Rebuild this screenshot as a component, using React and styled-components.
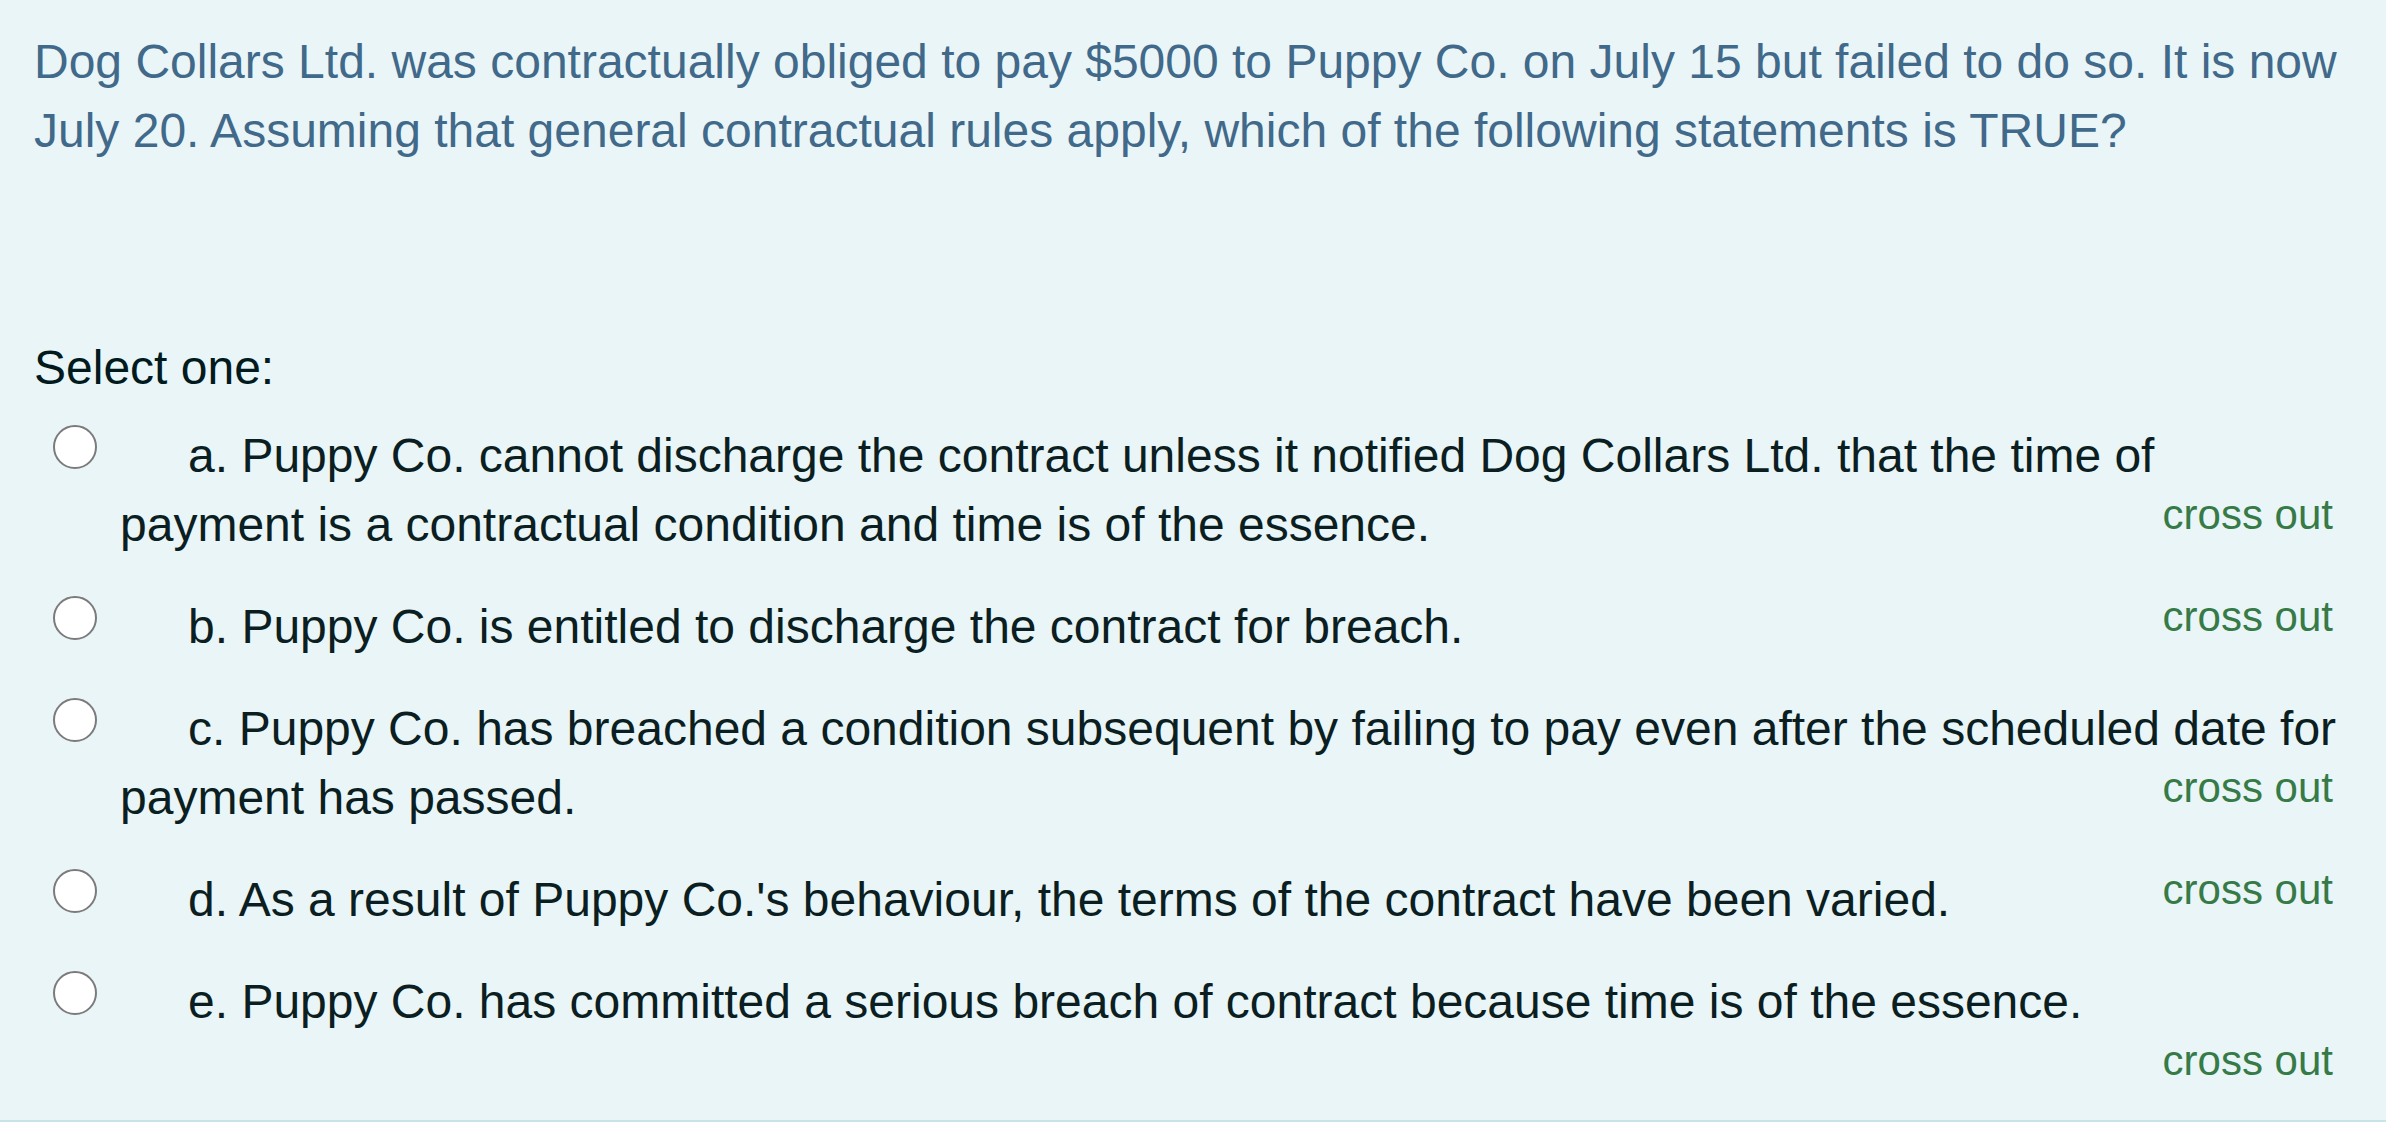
import React from "react";
import styled, { createGlobalStyle } from "styled-components";

const Global = createGlobalStyle`
  html, body {
    margin: 0;
    padding: 0;
    background: #eaf5f8;
  }
  body {
    font-family: "Liberation Sans", Arial, Helvetica, sans-serif;
  }
`;

const Formulation = styled.div`
  box-sizing: border-box;
  background: #eaf5f8;
  border-bottom: 3px solid #c8e4eb;
  padding: 27px 46px 18px 34px;
`;

const QText = styled.div`
  color: #41698a;
  font-size: 48px;
  line-height: 69px;
  margin-bottom: 168px;
`;

const Prompt = styled.div`
  color: #001a1e;
  font-size: 48px;
  line-height: 69px;
`;

const AnswerList = styled.div`
  margin-top: 2px;
`;

const Row = styled.div`
  display: flow-root;
  padding: 16.5px 0 16.5px 86px;
  text-indent: -86px;
  font-size: 48px;
  line-height: 69px;
  color: #0b1f22;
`;

const Radio = styled.input.attrs({ type: "radio" })`
  appearance: none;
  display: inline-block;
  box-sizing: border-box;
  width: 44px;
  height: 44px;
  border: 2.5px solid #7b7b7b;
  border-radius: 50%;
  background: #fff;
  vertical-align: top;
  margin: 4px 91px 0 19px;
  text-indent: 0;
  padding: 0;
`;

const CrossOut = styled.span`
  float: right;
  margin: 0 7px 0 100px;
  text-indent: 0;
  font-size: 42px;
  line-height: 50px;
  color: #367b47;
  cursor: pointer;
`;

const options = [
  {
    n: "a",
    text:
      "Puppy Co. cannot discharge the contract unless it notified Dog Collars Ltd. that the time of payment is a contractual condition and time is of the essence.",
  },
  { n: "b", text: "Puppy Co. is entitled to discharge the contract for breach." },
  {
    n: "c",
    text:
      "Puppy Co. has breached a condition subsequent by failing to pay even after the scheduled date for payment has passed.",
  },
  {
    n: "d",
    text:
      "As a result of Puppy Co.'s behaviour, the terms of the contract have been varied.",
  },
  {
    n: "e",
    text:
      "Puppy Co. has committed a serious breach of contract because time is of the essence.",
  },
];

export default function App() {
  return (
    <>
      <Global />
      <Formulation>
        <QText>
          Dog Collars Ltd. was contractually obliged to pay $5000 to Puppy Co.
          on July 15 but failed to do so. It is now July 20. Assuming that
          general contractual rules apply, which of the following statements is
          TRUE?
        </QText>
        <Prompt>Select one:</Prompt>
        <AnswerList>
          {options.map((o) => (
            <Row key={o.n}>
              <Radio name="answer" aria-label={o.n} />
              {o.n}. {o.text}
              <CrossOut>cross out</CrossOut>
            </Row>
          ))}
        </AnswerList>
      </Formulation>
    </>
  );
}
